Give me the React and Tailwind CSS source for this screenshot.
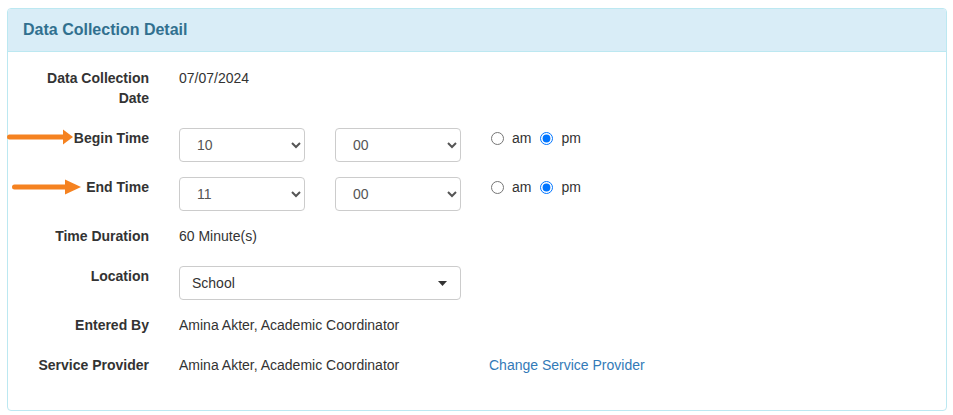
import React from "react";

const Arrow = ({ className, shaft, width }) => (
  <svg
    className={className}
    width={width}
    height="18"
    viewBox={`0 0 ${width} 18`}
  >
    <line x1="2.5" y1="9" x2={shaft} y2="9" stroke="#f58220" strokeWidth="5" strokeLinecap="round" />
    <polygon points={`${shaft - 1},1.5 ${width},9 ${shaft - 1},16.5`} fill="#f58220" />
  </svg>
);

const Label = ({ children }) => (
  <div className="w-[141px] shrink-0 text-right font-bold leading-5 text-[#333]">
    {children}
  </div>
);

const TimeSelect = ({ value, options }) => (
  <select
    defaultValue={value}
    className="h-[34px] w-[126px] rounded-[4px] border border-[#ccc] bg-white pl-[13px] pr-2 text-[14px] text-[#555] outline-none"
  >
    {options.map((o) => (
      <option key={o} value={o}>
        {o}
      </option>
    ))}
  </select>
);

const AmPm = ({ name }) => (
  <div className="ml-[30px] flex items-center leading-5 text-[#333]">
    <input type="radio" name={name} className="m-0 h-[13px] w-[13px]" />
    <span className="ml-[8px] mr-[9px]">am</span>
    <input type="radio" name={name} defaultChecked className="m-0 h-[13px] w-[13px]" />
    <span className="ml-[8px]">pm</span>
  </div>
);

const hours = ["01", "02", "03", "04", "05", "06", "07", "08", "09", "10", "11", "12"];
const minutes = ["00", "15", "30", "45"];

export default function App() {
  return (
    <div className="relative min-h-screen bg-white pl-[7px] pr-[6px] pt-[8px] font-['Liberation_Sans',Arial,sans-serif] text-[14px]">
      <div className="rounded-[4px] border border-[#bce8f1] bg-white">
        {/* Header */}
        <div className="flex h-[43px] items-center rounded-t-[3px] border-b border-[#bce8f1] bg-[#d9edf7] px-[15px]">
          <h3 className="text-[16px] font-bold text-[#31708f]">Data Collection Detail</h3>
        </div>

        {/* Body */}
        <div className="pt-[16px] pb-[35px]">
          <div className="flex">
            <Label>
              Data Collection
              <br />
              Date
            </Label>
            <div className="ml-[30px] leading-5 text-[#333]">07/07/2024</div>
          </div>

          <div className="mt-[20px] flex items-start">
            <Label>Begin Time</Label>
            <div className="ml-[30px] flex items-start">
              <TimeSelect value="10" options={hours} />
              <div className="ml-[30px]">
                <TimeSelect value="00" options={minutes} />
              </div>
              <AmPm name="begin" />
            </div>
          </div>

          <div className="mt-[15px] flex items-start">
            <Label>End Time</Label>
            <div className="ml-[30px] flex items-start">
              <TimeSelect value="11" options={hours} />
              <div className="ml-[30px]">
                <TimeSelect value="00" options={minutes} />
              </div>
              <AmPm name="end" />
            </div>
          </div>

          <div className="mt-[15px] flex">
            <Label>Time Duration</Label>
            <div className="ml-[30px] leading-5 text-[#333]">60 Minute(s)</div>
          </div>

          <div className="mt-[20px] flex items-start">
            <Label>Location</Label>
            <div className="ml-[30px] flex h-[34px] w-[282px] items-center justify-between rounded-[4px] border border-[#ccc] bg-white pl-[12px] pr-[13px] text-[#333]">
              <span>School</span>
              <svg width="9" height="5" viewBox="0 0 9 5">
                <polygon points="0,0 9,0 4.5,5" fill="#333" />
              </svg>
            </div>
          </div>

          <div className="mt-[15px] flex">
            <Label>Entered By</Label>
            <div className="ml-[30px] leading-5 text-[#333]">Amina Akter, Academic Coordinator</div>
          </div>

          <div className="mt-[20px] flex">
            <Label>Service Provider</Label>
            <div className="ml-[30px] w-[310px] leading-5 text-[#333]">Amina Akter, Academic Coordinator</div>
            <a href="#" className="leading-5 text-[#337ab7]">
              Change Service Provider
            </a>
          </div>
        </div>
      </div>

      {/* Annotation arrows */}
      <Arrow className="absolute left-[7px] top-[128px]" shaft={57} width={66} />
      <Arrow className="absolute left-[12px] top-[178px]" shaft={54} width={69} />
    </div>
  );
}
